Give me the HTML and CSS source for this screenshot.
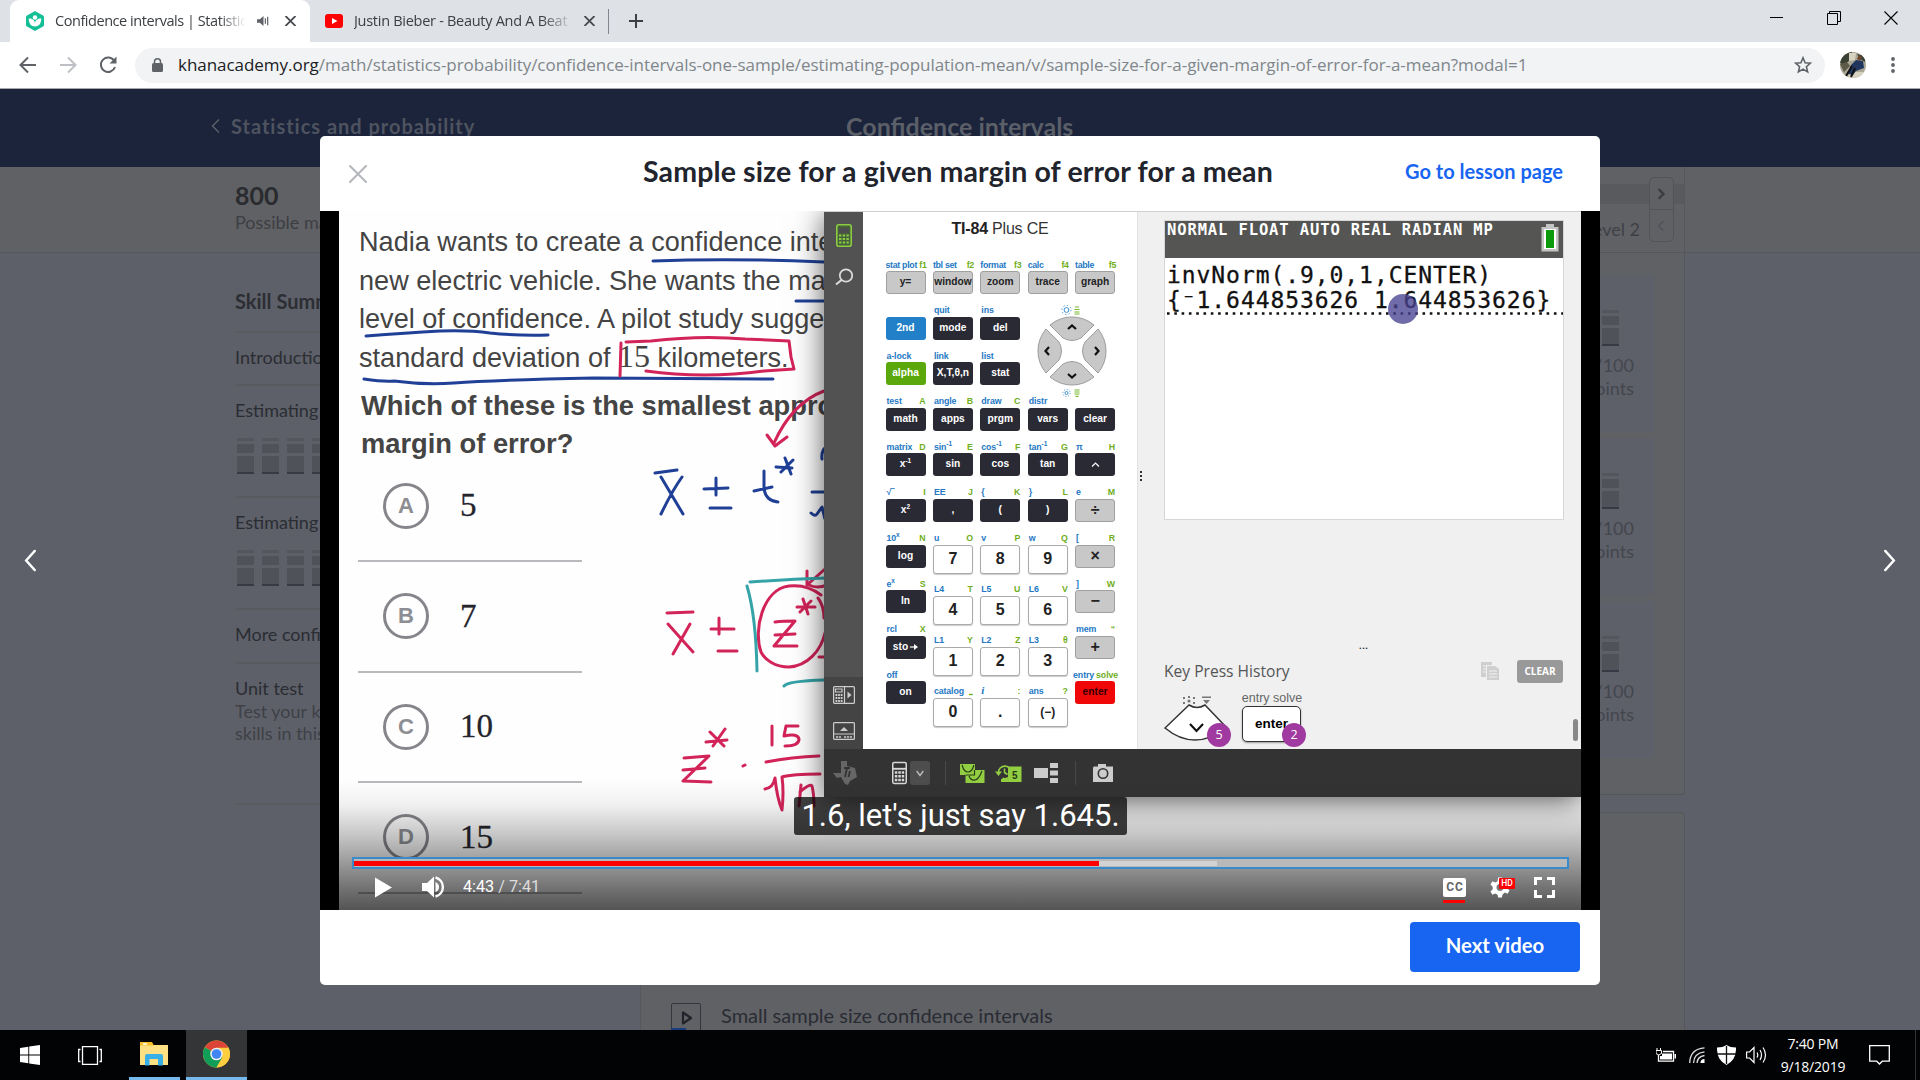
FILE: index.html
```html
<!DOCTYPE html>
<html lang="en">
<head>
<meta charset="utf-8">
<title>Confidence intervals | Statistics and probability</title>
<link rel="stylesheet" href="styles.css">
</head>
<body>
<div class="desktop">
  <div class="tabstrip">
    <div class="tab active">
      <svg class="favicon" viewBox="0 0 18 20"><path d="M9 0l8 4.500q1 .5 1 1.500v8q0 1-1 1.500L9 20l-8-4.500q-1-.5-1-1.500V6q0-1 1-1.500z" fill="#14bf96"/><circle cx="9" cy="6.500" r="2.200" fill="#fff"/><path d="M2.700 7.500c4 0 6 2 6.300 4.500.3-2.500 2.300-4.500 6.300-4.500 0 5-2.500 8-6.300 8s-6.300-3-6.300-8z" fill="#fff"/></svg>
      <span class="tab-title t1">Confidence intervals | Statistics</span>
      <svg class="speaker" viewBox="0 0 14 12"><path d="M0 4h3l4-3.500v11L3 8H0z" fill="#5f6368"/><path d="M9 3v6M11.500 1.500v9" stroke="#5f6368" stroke-width="1.300"/></svg>
      <svg class="x" viewBox="0 0 10 10"><path d="M0 0l10 10M10 0L0 10" stroke="#45494d" stroke-width="1.800"/></svg>
    </div>
    <div class="tab">
      <svg class="favicon" viewBox="0 0 18 20"><rect y="3" width="18" height="14" rx="3" fill="#f00"/><path d="M7 7l5.500 3L7 13z" fill="#fff"/></svg>
      <span class="tab-title t2">Justin Bieber - Beauty And A Beat</span>
      <svg class="x" viewBox="0 0 10 10"><path d="M0 0l10 10M10 0L0 10" stroke="#45494d" stroke-width="1.800"/></svg>
    </div>
    <svg class="plus" viewBox="0 0 16 16"><path d="M8 1v14M1 8h14" stroke="#3c4043" stroke-width="2"/></svg>
    <div class="win">
      <svg width="14" height="14" viewBox="0 0 14 14"><path d="M0 6.500h13" stroke="#000"/></svg>
      <svg width="14" height="14" viewBox="0 0 14 14"><path d="M.5 2.500h10v11H.5zM2.500 2.500V.5h11v10h-3" fill="none" stroke="#000"/></svg>
      <svg width="14" height="14" viewBox="0 0 14 14"><path d="M.5.5l13 13M13.500.5l-13 13" stroke="#000" stroke-width="1.100"/></svg>
    </div>
  </div>
  <div class="toolbar">
    <svg class="nav" viewBox="0 0 20 20"><path d="M18 10H3M10 2.500L2.500 10l7.500 7.500" fill="none" stroke="#5f6368" stroke-width="2"/></svg>
    <svg class="nav" viewBox="0 0 20 20"><path d="M2 10h15M10 2.500l7.500 7.500-7.500 7.500" fill="none" stroke="#bdc1c6" stroke-width="2"/></svg>
    <svg class="nav" viewBox="0 0 20 20"><path d="M16.300 6A7.200 7.200 0 1 0 17 12" fill="none" stroke="#5f6368" stroke-width="2"/><path d="M18.500 1.500v7h-7z" fill="#5f6368"/></svg>
    <div class="omnibox">
      <svg class="lock" viewBox="0 0 11 14"><rect y="5" width="11" height="9" rx="1.500" fill="#5f6368"/><path d="M2.500 6V3.800a3 3 0 0 1 6 0V6" fill="none" stroke="#5f6368" stroke-width="1.500"/></svg>
      <span class="url"><b>khanacademy.org</b>/math/statistics-probability/confidence-intervals-one-sample/estimating-population-mean/v/sample-size-for-a-given-margin-of-error-for-a-mean?modal=1</span>
      <svg class="star" viewBox="0 0 18 18"><path d="M9 1.800l2.100 5 5.300.4-4 3.500 1.200 5.200L9 13.100l-4.600 2.800 1.200-5.200-4-3.500 5.300-.4z" fill="none" stroke="#5f6368" stroke-width="1.600"/></svg>
    </div>
    <svg class="avatar" viewBox="0 0 26 26"><defs><clipPath id="av"><circle cx="13" cy="13" r="13"/></clipPath></defs><g clip-path="url(#av)"><path fill="#aaa694" d="M0 0h26v26H0z"/><path fill="#3a4034" d="M0 0h12l-2 8-6 5-4-2zM17 2l8 2v6l-5-3z"/><path fill="#5d5a48" d="M0 12l7-2 3 4-6 6z"/><path fill="#d8d2c0" d="M9 1h7l-1 7-6 1zM9 20h17v6H8z"/><path fill="#20365f" d="M16 8l7 1 1 7-8 3-3 4-5-1 3-9z"/><path fill="#6c4730" d="M19 3l3 2-2 4-3-2z"/><path d="M6 24l6-10M11 25l4-9" stroke="#111" stroke-width="2"/></g></svg>
    <svg class="dots" viewBox="0 0 4 18"><circle cx="2" cy="3" r="1.900" fill="#5f6368"/><circle cx="2" cy="9" r="1.900" fill="#5f6368"/><circle cx="2" cy="15" r="1.900" fill="#5f6368"/></svg>
  </div>

  <div class="page">
    <header class="site-head">
      <svg class="crumb-arrow" viewBox="0 0 9 14"><path d="M8 .5L1.500 7 8 13.500" fill="none" stroke="#5a5f69" stroke-width="1.500"/></svg>
      <span class="crumb">Statistics and probability</span>
      <span class="unit">Confidence intervals</span>
    </header>
    <section class="mastery">
      <div class="points"><b>800</b><span>Possible mastery points</span></div>
      <div class="levels"><div class="band"></div><span>Level 2</span>
        <div class="steps"><svg viewBox="0 0 24 31"><path d="M9 11l5 5-5 5" fill="none" stroke="#3c3d41" stroke-width="2.500"/></svg><svg viewBox="0 0 24 31"><path d="M14 11l-5 5 5 5" fill="none" stroke="#515257" stroke-width="1.500"/></svg></div>
      </div>
    </section>
    <div class="columns">
      <aside class="skills">
        <h3>Skill Summary</h3>
        <div class="skill intro">Introduction</div>
        <div class="skill est">Estimating a mean<div class="towers"><i></i><i></i><i></i><i></i></div></div>
        <div class="skill est">Estimating a mean<div class="towers"><i></i><i></i><i></i><i></i></div></div>
        <div class="skill more">More confidence</div>
        <div class="skill test">Unit test<p>Test your knowledge<br>skills in this unit</p></div>
      </aside>
      <main class="lessons">
        <div class="panel one">
          <div class="card"><div class="towers"><i></i></div><p>0/100<br>points</p></div>
          <div class="card"><div class="towers"><i></i></div><p>0/100<br>points</p></div>
          <div class="card"><div class="towers"><i></i></div><p>0/100<br>points</p></div>
        </div>
        <div class="panel two">
          <svg viewBox="0 0 30 30"><path d="M.5 40V2Q.5.5 2 .5h26q1.500 0 1.500 1.500v38" fill="none" stroke="#34363d"/><path d="M12 9.500v11l8-5.500z" fill="none" stroke="#22242b" stroke-width="2.200" stroke-linejoin="round"/><path d="M0 25h15v5H0z" fill="#1c3c80"/></svg>
          <span>Small sample size confidence intervals</span>
        </div>
      </main>
    </div>
  </div>

  <svg class="page-prev" viewBox="0 0 14 24"><path d="M12 2L3 12l9 10" fill="none" stroke="#fff" stroke-width="2.500" stroke-linecap="round"/></svg>
  <svg class="page-next" viewBox="0 0 14 24"><path d="M2 2l9 10-9 10" fill="none" stroke="#fff" stroke-width="2.500" stroke-linecap="round"/></svg>

  <div class="modal">
    <div class="modal-head">
      <svg class="close" viewBox="0 0 18 18"><path d="M1 1l16 16M17 1L1 17" stroke="#b3b6bb" stroke-width="2" stroke-linecap="round"/></svg>
      <h1>Sample size for a given margin of error for a mean</h1>
      <a>Go to lesson page</a>
    </div>
    <div class="player">
      <div class="frame">
        <div class="question">
          <p>Nadia wants to create a confidence interval</p>
          <p>new electric vehicle. She wants the margin</p>
          <p>level of confidence. A pilot study suggests</p>
          <p>standard deviation of <em>15</em> kilometers.</p>
        </div>
        <div class="ask">
          <p>Which of these is the smallest approximate</p>
          <p>margin of error?</p>
        </div>
        <ul class="choices">
          <li><i>A</i><span>5</span></li>
          <li><i>B</i><span>7</span></li>
          <li><i>C</i><span>10</span></li>
          <li><i>D</i><span>15</span></li>
        </ul>
        <svg class="ink" viewBox="339 211 1242 699">
          <g stroke="#1f4096" stroke-width="3">
            <path d="M653 261q80-3 171 1M796 301h30M366 336q40-3 74-5 30-1 50 2 30 3 58 2"/>
            <path d="M364 379q20 3 30 2 30 4 60 2 40-3 140-5l179 1"/>
            <path d="M655 473l22-3M661 477l22 37M682 477q-10 14-21 37M704 489l24-1M716 478v17M710 508h21M764 471v18q2 12 14 13M754 491l18-4M785 458l6 16M793 460l-12 12M776 467l16 1M826 447q-5 4-4 12M812 492h14M811 513q4 4 6 1l5-7 3 12"/>
          </g>
          <g stroke="#d22459" stroke-width="3">
            <path d="M621 343l-1 33M626 342l25-1q50-6 94-2l44 2 2 16 3 12-30 2q-60 8-118 0"/>
            <path d="M824 391q-32 12-50 52M767 435l8 11 12-9"/>
            <path d="M667 613l26-1M668 624l25 28M690 624l-17 30M711 629h23M719 618v16M718 651h19"/>
            <path d="M775 622q8-1 20-1l-21 25h23M775 635l20-1M803 599l5 15M811 601l-11 11M797 607h18M821 595q-14-11-32-9c-26 3-36 44-28 66 4 8 14 15 28 15 18-1 32-16 36-34M818 598q6 8 6 20M819 657h6M807 571v14l18-16M809 585q8 4 18 0"/>
            <path d="M684 758l25-2-26 25 28 1M683 770l22-2M710 732l14 14M725 729l-12 17M706 742l21-2M743 766l2-1M772 726v19M786 726h12M786 726l-2 10q14-3 15 3 0 7-14 7M766 762q26-5 53-6M765 789q8-1 10-11 2 20 7 32 2-18 0-33 10-3 38-3M801 785l-2 21M800 792q10-9 12-6 2 8 2 20"/>
          </g>
          <g stroke="#35a3a8" stroke-width="3"><path d="M750 582q40-3 76-4M747 586q9 30 10 85M784 686q4-5 40-6"/></g>
        </svg>

        <div class="emulator">
          <div class="emu-top">
            <div class="rail">
              <svg viewBox="0 0 16 23"><rect x=".8" y=".8" width="14.400" height="21.400" rx="2" fill="#45603a" stroke="#8ccc42" stroke-width="1.600"/><path d="M3 4h10v5H3z" fill="#4d4d50"/><path d="M3 11.500h10M3 15h10M3 18.500h10" stroke="#8ccc42" stroke-width="2.200" stroke-dasharray="2.400 1.300"/></svg>
              <svg class="search" viewBox="0 0 18 18"><circle cx="11" cy="7.500" r="6.200" fill="none" stroke="#ddd" stroke-width="1.700"/><path d="M6.500 12L1 16.500" stroke="#ddd" stroke-width="2"/></svg>
              <div class="rail-low">
                <svg viewBox="0 0 22 18"><g fill="none" stroke="#ccc" stroke-width="1.200"><rect x=".6" y=".6" width="20.800" height="16.800" rx="1"/><path d="M11.500 1v16M2.500 3h6.500v3H2.500z"/></g><path d="M2.500 9h7M2.500 12h7M2.500 15h7" stroke="#ccc" stroke-width="1.800" stroke-dasharray="1.800 .8"/><path d="M14.500 5.500L18.500 9l-4 3.500z" fill="#ccc"/></svg>
                <svg viewBox="0 0 22 18"><rect x=".6" y=".6" width="20.800" height="16.800" rx="1" fill="none" stroke="#ccc" stroke-width="1.200"/><path d="M1 12h20" stroke="#ccc"/><path d="M11 5l4 4H7z" fill="#ccc"/><path d="M3 15h5M11 15h8" stroke="#ccc" stroke-width="1.700" stroke-dasharray="2.200 .8"/></svg>
              </div>
            </div>
            <div class="keypad">
              <div class="brand"><b>TI-84</b> Plus CE</div>
              <div class="cols">
                <div class="col">
                  <div class="k g"><p>stat plot<s>f1</s></p><b>y=</b></div>
                  <div class="k blue"><p></p><b>2nd</b></div>
                  <div class="k green"><p>a-lock</p><b>alpha</b></div>
                  <div class="k"><p>test<s>A</s></p><b>math</b></div>
                  <div class="k"><p>matrix<s>D</s></p><b>x<sup>-1</sup></b></div>
                  <div class="k"><p>√‾<s>I</s></p><b>x<sup>2</sup></b></div>
                  <div class="k"><p><span>10<sup>x</sup></span><s>N</s></p><b>log</b></div>
                  <div class="k"><p><span>e<sup>x</sup></span><s>S</s></p><b>ln</b></div>
                  <div class="k"><p>rcl<s>X</s></p><b>sto<svg class="arr" width="8" height="6" viewBox="0 0 8 6"><path d="M0 3h6" stroke="#fff" stroke-width="1.200"/><path d="M4 0l4 3-4 3z" fill="#fff"/></svg></b></div>
                  <div class="k"><p>off</p><b>on</b></div>
                </div>
                <div class="col">
                  <div class="k g"><p>tbl set<s>f2</s></p><b>window</b></div>
                  <div class="k"><p>quit</p><b>mode</b></div>
                  <div class="k"><p>link</p><b>X,T,θ,n</b></div>
                  <div class="k"><p>angle<s>B</s></p><b>apps</b></div>
                  <div class="k"><p><span>sin<sup>-1</sup></span><s>E</s></p><b>sin</b></div>
                  <div class="k"><p>EE<s>J</s></p><b>,</b></div>
                  <div class="k n"><p>u<s>O</s></p><b>7</b></div>
                  <div class="k n"><p>L4<s>T</s></p><b>4</b></div>
                  <div class="k n"><p>L1<s>Y</s></p><b>1</b></div>
                  <div class="k n"><p>catalog<s>⎵</s></p><b>0</b></div>
                </div>
                <div class="col">
                  <div class="k g"><p>format<s>f3</s></p><b>zoom</b></div>
                  <div class="k"><p>ins</p><b>del</b></div>
                  <div class="k"><p>list</p><b>stat</b></div>
                  <div class="k"><p>draw<s>C</s></p><b>prgm</b></div>
                  <div class="k"><p><span>cos<sup>-1</sup></span><s>F</s></p><b>cos</b></div>
                  <div class="k"><p>{<s>K</s></p><b>(</b></div>
                  <div class="k n"><p>v<s>P</s></p><b>8</b></div>
                  <div class="k n"><p>L5<s>U</s></p><b>5</b></div>
                  <div class="k n"><p>L2<s>Z</s></p><b>2</b></div>
                  <div class="k n"><p><em>i</em><s>:</s></p><b>.</b></div>
                </div>
                <div class="col">
                  <div class="k g"><p>calc<s>f4</s></p><b>trace</b></div>
                  <div class="gap"></div>
                  <div class="k"><p>distr</p><b>vars</b></div>
                  <div class="k"><p><span>tan<sup>-1</sup></span><s>G</s></p><b>tan</b></div>
                  <div class="k"><p>}<s>L</s></p><b>)</b></div>
                  <div class="k n"><p>w<s>Q</s></p><b>9</b></div>
                  <div class="k n"><p>L6<s>V</s></p><b>6</b></div>
                  <div class="k n"><p>L3<s>θ</s></p><b>3</b></div>
                  <div class="k n neg"><p>ans<s>?</s></p><b>(−)</b></div>
                </div>
                <div class="col">
                  <div class="k g"><p>table<s>f5</s></p><b>graph</b></div>
                  <div class="gap"></div>
                  <div class="k"><p></p><b>clear</b></div>
                  <div class="k"><p>π<s>H</s></p><b><svg width="9" height="5" viewBox="0 0 9 5"><path d="M1 4.500L4.500 1 8 4.500" fill="none" stroke="#fff" stroke-width="1.200"/></svg></b></div>
                  <div class="k g op"><p>e<s>M</s></p><b>÷</b></div>
                  <div class="k g op"><p>[<s>R</s></p><b>×</b></div>
                  <div class="k g op"><p>]<s>W</s></p><b>−</b></div>
                  <div class="k g op"><p>mem<s>“</s></p><b>+</b></div>
                  <div class="k red"><p>entry<s>solve</s></p><b>enter</b></div>
                </div>
              </div>
              <svg class="dpad" viewBox="-36 -46 72 92">
                <g fill="#c8c8c8" stroke="#8d8d8d" stroke-width=".8">
                  <path d="M-22-26A34 34 0 0 1 22-26L9-13Q0-8-9-13z"/>
                  <path d="M22 26A34 34 0 0 1-22 26L-9 13Q0 8 9 13z"/>
                  <path d="M26-22A34 34 0 0 1 26 22L13 9Q8 0 13-9z"/>
                  <path d="M-26 22A34 34 0 0 1-26-22L-13-9Q-8 0-13 9z"/>
                </g>
                <path d="M-4-22l4-3.500 4 3.500M-4 23l4 3.500 4-3.500M23-4l3.500 4-3.500 4M-23-4l-3.500 4 3.500 4" fill="none" stroke="#111" stroke-width="2.200"/>
                <g fill="none" stroke="#3b8fd0"><circle cx="-5.500" cy="-41" r="2.400"/><circle cx="-5.500" cy="42" r="1.500"/><circle cx="-5.500" cy="-41" r="4.600" stroke-dasharray="1.200 2.400"/><circle cx="-5.500" cy="42" r="3.600" stroke-dasharray="1 1.800"/></g>
                <path d="M3-44h4M2.500-41.500h5M2.500-39h5M2.500-37h5M2.500 39h5M2.500 41h5M2.500 43h5M3.500 45.300h3" stroke="#7ab82e" stroke-width="1.200"/>
              </svg>
            </div>
            <div class="display">
              <div class="lcd">
                <div class="status"><span>NORMAL FLOAT AUTO REAL RADIAN MP</span>
                  <svg viewBox="0 0 18 28"><path d="M5 0h8v3h4.500v24.500H.5V3H5z" fill="#c4c4c4"/><path d="M3 5h12v20H3z" fill="#fff"/><path d="M5 6h8v18H5z" fill="#0c9a0c"/></svg></div>
                <p>invNorm(.9,0,1,CENTER)</p>
                <p>{⁻1.644853626 1.644853626}</p>
                <svg class="dotline" viewBox="0 0 396 3"><path d="M0 1.500h396" stroke="#111" stroke-width="2.600" stroke-dasharray="2.600 4.700"/></svg>
                <i class="pointer"></i>
              </div>
              <div class="grip">•••</div>
              <div class="history"><span>Key Press History</span>
                <svg viewBox="0 0 18 18"><path d="M0 0h11v3H5v12H0z" fill="#cfcfcf"/><path d="M2 4h3M2 7h3M2 10h3" stroke="#eee"/><path d="M6 4h8l4 3v11H6z" fill="#cfcfcf"/><path d="M8 9h8M8 12h8M8 15h8" stroke="#f0f0f0"/></svg>
                <button>CLEAR</button></div>
              <div class="presses">
                <div class="fan"><svg viewBox="0 0 64 46"><path d="M25 10L1 33Q30 57 63 33L41 10Q33 15 25 10z" fill="#fff" stroke="#333" stroke-width="1.500"/><path d="M26 29l6.500 7 6.500-7" fill="none" stroke="#111" stroke-width="2.200"/><g fill="#777"><circle cx="25" cy="6" r="1.600"/><path d="M19 2h2v2h-2zM24 1h2v2h-2zM29 2h2v2h-2zM19 7h2v2h-2zM29 7h2v2h-2zM38 1.500h9V3h-9zM39 5h7l-3.500 4z"/></g></svg><i>5</i></div>
                <div class="ent"><small>entry solve</small><b>enter</b><i>2</i></div>
              </div>
              <i class="vdots"></i><i class="thumb"></i>
            </div>
          </div>
          <div class="emu-bar">
            <svg class="ti" viewBox="0 0 26 26"><path d="M9 1h6v5l8 2 2 9-7 4-2 4-3-1-4-7-4 1-4-5h8z" fill="#666"/><path d="M12 8h6M15 8l-2 9M18 11l-1.500 6" stroke="#333" stroke-width="1.800"/></svg>
            <svg class="calc" viewBox="0 0 16 24"><rect x=".8" y=".8" width="14.400" height="22.400" rx="1.500" fill="none" stroke="#d8d8d8" stroke-width="1.600"/><path d="M1 7.500h14" stroke="#d8d8d8" stroke-width="2"/><path d="M3 11.500h10M3 15.500h10M3 19.500h10" stroke="#d8d8d8" stroke-width="2.600" stroke-dasharray="2.700 1"/></svg>
            <span class="drop"><svg width="8" height="7" viewBox="0 0 8 7"><path d="M.7 1L4 5.500 7.300 1" fill="none" stroke="#bbb" stroke-width="1.400"/></svg></span>
            <i class="sep"></i>
            <svg class="gr" viewBox="0 0 25 19"><path d="M0 0h15v6h9.500v13H5.500v-8H0z" fill="#92ce41"/><path d="M2 1q2 7 6 7t6-7M9 12q2 5 6 4t7-9M5.500 11h9V6" fill="none" stroke="#293c18" stroke-width="1.200"/></svg>
            <svg class="hs" viewBox="0 0 27 18"><path d="M13 2.500h13.500V18H6v-3h7z" fill="#92ce41"/><path d="M3.500 9a6.300 6.300 0 1 1 4 5.300M9.500 4.500v4l3 2" fill="none" stroke="#92ce41" stroke-width="1.600"/><path d="M0 7.500h7L3.500 12z" fill="#92ce41"/><text x="17" y="14.500" font-family="Liberation Sans" font-weight="bold" font-size="10" fill="#293c18">5</text></svg>
            <svg class="ly" viewBox="0 0 24 20"><path d="M0 5h14v10H0zM16 0h8v5h-8zM16 7.500h8v5h-8zM16 15h8v5h-8z" fill="#ccc"/></svg>
            <i class="sep b"></i>
            <svg class="cam" viewBox="0 0 20 18"><path d="M1 2.500h4V0h8v2.500h7V18H0V3.500z" fill="#ccc"/><circle cx="10" cy="9.500" r="4.700" fill="none" stroke="#333" stroke-width="1.600"/></svg>
          </div>
        </div>

        <div class="shade"></div>
        <div class="caption">1.6, let's just say 1.645.</div>
        <div class="controls">
          <div class="progress"><i class="buffer"></i><i class="played"></i></div>
          <div class="buttons">
            <svg class="play" viewBox="0 0 17 20"><path d="M0 0l17 10L0 20z" fill="#fff"/></svg>
            <svg class="vol" viewBox="0 0 23 22"><path d="M0 7h5l7-6.500v21L5 15H0zM13.500 6q3.500 1.500 3.500 5t-3.500 5z" fill="#fff"/><path d="M13.500 1.500a9.800 9.800 0 0 1 0 19" fill="none" stroke="#fff" stroke-width="2.400"/></svg>
            <span class="time">4:43 <s>/ 7:41</s></span>
            <span class="cc">CC</span>
            <span class="gear"><svg viewBox="-11 -11 22 22"><path d="M-2-10.500h4l.5 3 2.500 1.300 3-1.300 2 3.500-2.300 2v3l2.300 2-2 3.500-3-1.300L2.500 7.500l-.5 3h-4l-.5-3L-5 6.200l-3 1.300-2-3.500 2.300-2v-3l-2.300-2 2-3.500 3 1.300 2.500-1.300z" fill="#fff"/><circle r="3.600" fill="#777"/></svg><em>HD</em></span>
            <svg class="full" viewBox="0 0 21 21"><path d="M1.500 8V1.500H8M13 1.500h6.500V8M19.500 13v6.500H13M8 19.500H1.500V13" fill="none" stroke="#fff" stroke-width="3"/></svg>
          </div>
        </div>
      </div>
    </div>
    <div class="modal-foot"><button>Next video</button></div>
  </div>

  <div class="taskbar">
    <svg class="start" viewBox="0 0 20 20"><path d="M0 3l8.300-1.200v7.700H0zM9.200 1.600L20 0v9.500H9.200zM0 10.500h8.300v7.700L0 17zM9.200 10.500H20V20L9.200 18.400z" fill="#fff"/></svg>
    <svg class="tview" viewBox="0 0 24 19"><path d="M4.500.7h15v17.600h-15zM2.500 3.500H.7v12h1.800M21.500 3.500h1.800v12h-1.800" fill="none" stroke="#fff" stroke-width="1.300"/></svg>
    <div class="app files"><svg viewBox="0 0 28 24"><path d="M0 1h11l2 2h15v20H0z" fill="#fddf84"/><path d="M0 0h12l2 3.500H0z" fill="#f7bf2a"/><path d="M3 2h4" stroke="#fff" stroke-width="1.500"/><path d="M5 23.500V14q0-2 2-2h14q2 0 2 2v9.500h-5V17H9.500v6.500z" fill="#36b0e6"/></svg></div>
    <div class="app chrome"><svg viewBox="0 0 28 28"><circle cx="14" cy="14" r="14" fill="#fc3"/><path d="M14 14L1.900 7A14 14 0 0 1 26.100 7z" fill="#db4437"/><path d="M14 14L1.900 7A14 14 0 0 0 14 28l6-10.500z" fill="#0f9d58"/><path d="M14 7.500h12.400A14 14 0 0 1 14 28l6.500-11z" fill="#ffcd40"/><circle cx="14" cy="14" r="6.500" fill="#f1f1f1"/><circle cx="14" cy="14" r="5" fill="#4285f4"/></svg></div>
    <div class="tray">
      <svg class="bat" viewBox="0 0 20 15"><path d="M2.500 6.500V13.200h15V3.500H7" fill="none" stroke="#fff" stroke-width="1.300"/><path d="M6 5.500h10v6H4V8h2zM18.500 6v4.500H20V6z" fill="#fff"/><path d="M1 0v2M4.500 0v2M0 2.500h5.500v3L2.800 7 0 5.500z" stroke="#fff" fill="#000"/></svg>
      <svg class="wifi" viewBox="0 0 16 16"><g fill="none" stroke="#ddd" stroke-width="1.300"><path d="M.7 16Q1 2 15.500.8M4.500 16Q5 6 15.500 4.800M8 16q.5-6.500 7.500-7.500"/></g><path d="M11.500 16q0-4 4-4v4z" fill="#fff"/></svg>
      <svg class="shield" viewBox="0 0 19 20"><path d="M9.500 0Q13 2.500 19 2.500 19.500 15 9.500 20-.5 15 0 2.500 6 2.500 9.500 0z" fill="#fff"/><path d="M9.500 1v18M0 9h19" stroke="#111" stroke-width="1.300"/></svg>
      <svg class="snd" viewBox="0 0 21 18"><path d="M.6 6h3L8 1.500v15L3.600 12h-3zM11 6.500q1.500 2.500 0 5M14 4q3 5 0 10M17 1.500q5 7.500 0 15" fill="none" stroke="#fff" stroke-width="1.200"/></svg>
      <div class="clock">7:40 PM<br>9/18/2019</div>
      <svg class="note" viewBox="0 0 21 20"><path d="M.7.700h19.600v15.500h-7L10.500 19l-2.800-2.800h-7z" fill="none" stroke="#fff" stroke-width="1.300"/></svg>
    </div>
  </div>
</div>
</body>
</html>
```
FILE: styles.css
```css
* { box-sizing: border-box; }
body { margin: 0; }
p, h1, h3, ul { margin: 0; padding: 0; font-weight: inherit; }
s { text-decoration: none; }
svg { display: block; flex: none; }
.desktop { position: relative; width: 1920px; height: 1080px; overflow: hidden; display: flex; flex-direction: column; font-family: Lato, sans-serif; white-space: nowrap; }

/* browser chrome */
.tabstrip { height: 42px; flex: none; background: #dee1e6; display: flex; padding-left: 10px; font: 14.500px "Open Sans", sans-serif; color: #3c4043; }
.tab { width: 298px; display: flex; align-items: center; padding: 0 14px 0 15px; }
.tab + .tab { background: linear-gradient(#80868b, #80868b) right center / 1px 25px no-repeat; width: 299px; }
.active { background: #fff; border-radius: 9px 9px 0 0; width: 300px; padding-left: 16px; }
.favicon { width: 18px; height: 20px; margin-right: 11px; }
.tab-title { overflow: hidden; padding-bottom: 2px; -webkit-mask: linear-gradient(90deg, #000 86%, transparent); mask: linear-gradient(90deg, #000 86%, transparent); }
.t1 { width: 192px; letter-spacing: -.45px; margin-right: 11px; }
.t2 { width: 221px; letter-spacing: -.28px; margin-right: 11px; }
.speaker { width: 13px; height: 12px; margin-right: 15px; }
.x { width: 11px; height: 10px; }
.plus { width: 16px; height: 16px; margin: 13px 0 0 19px; }
.win { margin-left: auto; display: flex; gap: 43px; padding: 11px 22px 0 0; }
.toolbar { height: 47px; flex: none; background: #fff; border-bottom: 1px solid #a9abae; display: flex; align-items: center; padding: 0 25px 0 18px; }
.nav { width: 20px; height: 20px; margin-right: 20px; }
.nav:nth-child(3) { margin-right: 17px; }
.omnibox { flex: 1; height: 35px; border-radius: 18px; background: #f1f3f4; display: flex; align-items: center; padding: 0 13px 0 17px; }
.lock { width: 11px; height: 14px; margin-right: 15px; }
.url { font: 17px "Open Sans", sans-serif; letter-spacing: -.04px; color: #80868b; padding-bottom: 2px; }
.url b { font-weight: 400; color: #202124; }
.star { width: 18px; height: 18px; margin-left: auto; }
.avatar { width: 26px; height: 26px; margin: 0 25px 0 15px; }
.dots { width: 4px; height: 18px; }

/* dimmed course page */
.page { flex: 1; background: #5d6068; overflow: hidden; }
.site-head { height: 78px; background: #1b243b; display: flex; align-items: center; padding: 0 0 5px 211px; font-weight: 700; }
.crumb-arrow { width: 9px; height: 14px; margin-right: 11px; }
.crumb { font-size: 20px; color: #4e535f; width: 615px; letter-spacing: .98px; }
.unit { font-size: 25px; color: #5b5f68; }
.mastery { height: 86px; background: #606165; border-bottom: 1px solid #55565a; display: flex; justify-content: space-between; padding-left: 235px; }
.points { display: flex; flex-direction: column; padding-top: 13px; font-size: 18px; line-height: 22px; color: #3d3e43; }
.points b { font-size: 25px; line-height: 31px; color: #2a2b2f; }
.levels { width: 1044px; margin-right: 235px; border-right: 1px solid #56575b; position: relative; }
.band { height: 20px; margin-top: 17px; background: #595a5e; }
.levels span { display: block; text-align: right; padding: 14px 44px 0 0; font-size: 18px; color: #3f4045; }
.steps { position: absolute; right: 10px; top: 10px; width: 25px; height: 65px; border: 1px solid #525357; border-radius: 5px; background: #606165; }
.steps svg { width: 23px; height: 31px; }
.steps svg + svg { border-top: 1px solid #525357; height: 32px; }
.columns { display: flex; padding-left: 235px; height: 777px; }
.skills { width: 405px; font-size: 18px; color: #2b2d33; }
.skills h3 { font-size: 20px; font-weight: 700; height: 80px; padding-top: 36px; border-bottom: 2px solid #585b60; color: #2c2e34; }
.skill { border-bottom: 2px solid #585b60; padding-top: 12px; line-height: 24px; }
.intro { height: 53px; }
.est { height: 112px; }
.more { height: 54px; }
.test { height: 141px; }
.test p { line-height: 22px; color: #3f4147; }
.towers { display: flex; gap: 8px; padding: 12px 0 0 2px; }
.towers i { width: 17px; height: 40px; background: linear-gradient(#373a44, #373a44) 0 38px / 17px 2px no-repeat, linear-gradient(#50525a, #50525a) 0 22px / 17px 16px no-repeat, linear-gradient(#50525a, #50525a) 0 10px / 17px 9px no-repeat, conic-gradient(from -30deg at 50% 0, #54565e 0 0) 0 4px / 17px 3px no-repeat; }
.lessons { width: 1045px; }
.panel { background: #606165; border: 1px solid #56575b; border-radius: 4px; }
.one { height: 542px; border-top: 0; border-radius: 0 0 4px 4px; display: flex; flex-direction: column; gap: 6px; padding: 22px 30px 0; }
.card { height: 157px; background: #5d6069; display: flex; flex-direction: column; align-items: flex-end; padding-right: 20px; text-align: right; font-size: 18px; line-height: 22.500px; color: #44464d; }
.card .towers { padding: 31px 15px 8px 0; }
.two { margin-top: 17px; height: 300px; display: flex; align-items: flex-start; gap: 20px; padding: 190px 30px 0; }
.two svg { width: 30px; height: 30px; }
.two span { font-size: 20px; line-height: 24px; color: #292c34; }
.page-prev, .page-next { position: absolute; top: 549px; width: 14px; height: 23px; }
.page-prev { left: 23px; }
.page-next { left: 1883px; }

/* lesson modal */
.modal { position: absolute; left: 320px; top: 136px; width: 1280px; height: 849px; border-radius: 5px; background: #fff; overflow: hidden; display: flex; flex-direction: column; }
.modal-head { height: 75px; display: flex; align-items: center; padding: 0 37px 0 29px; }
.modal-head .close { width: 18px; height: 18px; margin-right: 276px; }
.modal-head h1 { font-size: 28.500px; font-weight: 700; color: #21242c; width: 722px; letter-spacing: .12px; padding-bottom: 6px; }
.modal-head a { font-size: 20px; font-weight: 700; color: #1865f2; margin-left: auto; padding-bottom: 5px; }
.player { height: 699px; background: #000; padding: 0 19px; }
.frame { position: relative; height: 699px; width: 1242px; background: #fefefe; overflow: hidden; font-family: "Liberation Sans", sans-serif; }
.question { padding: 12px 0 0 20px; font-size: 27.100px; line-height: 38.600px; color: #444; }
.question em { font: 32px/30px "Liberation Serif", serif; }
.ask { padding: 10px 0 0 22px; font-size: 27.300px; font-weight: 700; line-height: 38px; color: #444; }
.choices { list-style: none; margin-top: -12px; padding: 0 0 0 19px; width: 243px; }
.choices li { height: 110.600px; border-bottom: 2px solid #b9babd; display: flex; align-items: center; padding-left: 25px; }
.choices i { width: 46px; height: 46px; border: 3.500px solid #85868b; border-radius: 50%; display: flex; align-items: center; justify-content: center; font: 700 22px "Liberation Sans", sans-serif; color: #8d8e93; margin-right: 31px; }
.choices span { font: 33px "Liberation Serif", serif; color: #24242c; -webkit-text-stroke: .3px #24242c; }
.ink { position: absolute; inset: 0; width: 1242px; height: 699px; fill: none; stroke-linecap: round; stroke-linejoin: round; }

/* calculator emulator */
.emulator { position: absolute; left: 485px; top: 0; width: 757px; height: 586px; box-shadow: 0 4px 28px rgba(0,0,0,.65); display: flex; flex-direction: column; }
.emu-top { height: 538px; display: flex; border-top: 1px solid #d0d0d0; background: #f0f0f0; }
.rail { width: 39px; background: #525252; display: flex; flex-direction: column; align-items: center; padding-top: 12px; }
.rail > svg { width: 16px; height: 23px; margin-bottom: 21px; }
.rail > .search { width: 18px; height: 18px; }
.rail-low { margin-top: auto; width: 39px; height: 72px; background: #444; display: flex; flex-direction: column; align-items: center; gap: 18px; padding-top: 9px; }
.rail-low svg { width: 22px; height: 18px; }
.keypad { width: 275px; background: #fff; position: relative; }
.brand { text-align: center; font-size: 16px; line-height: 33px; color: #333; letter-spacing: -.2px; height: 36.500px; }
.brand b { color: #222; }
.cols { display: flex; gap: 7.400px; padding-left: 22.500px; }
.col { width: 40px; }
.k { height: 45.600px; }
.k p { height: 22.600px; display: flex; justify-content: space-between; font-size: 8.800px; font-weight: 700; line-height: 10px; padding: 11px 0 0 1px; color: #2478c4; letter-spacing: -.1px; }
.k:first-child p { letter-spacing: -.3px; margin: 0 -1px; }
.k s { color: #6fae1c; }
.k sup { font-size: 6.500px; line-height: 0; }
.k em { font: italic 700 11px/8px "Liberation Serif", serif; }
.k b { height: 23px; display: flex; align-items: center; justify-content: center; border-radius: 3px; background: #2a2a35; color: #fff; font-size: 10.200px; line-height: 10px; padding-bottom: 1px; }
.k b sup { margin-top: -7px; }
.k b .arr { margin-left: 2px; }
.g b { background: #c8c8c8; color: #222; border: 1px solid #a0a0a0; }
.blue b { background: #2280c8; }
.green b { background: #5ba80c; }
.red b { background: #f00808; color: #300; }
.red p { margin: 0 -3px; }
.op b { font-size: 16px; }
.n { height: 51.100px; }
.n b { height: 29px; background: #fff; border: 1px solid #aaa; color: #222; font-size: 16px; box-shadow: 0 1px 1px #ccc; }
.n.neg b { font-size: 12px; }
.gap { height: 91.200px; }
.dpad { position: absolute; left: 173px; top: 93px; width: 72px; height: 92px; }
.display { flex: 1; background: #f0f0f0; padding: 8px 17px 0 26px; position: relative; border-left: 1px solid #e2e2e2; }
.lcd { position: relative; height: 300px; background: #fff; border: 1px solid #d6d6d6; font: 23px/25px "DejaVu Sans Mono", monospace; color: #111; -webkit-text-stroke: .3px #111; }
.status { height: 37px; background: #555653; color: #fff; display: flex; justify-content: space-between; padding: 0 4px 0 2px; margin-bottom: 5px; font: 700 15.500px/19px "DejaVu Sans Mono", monospace; letter-spacing: .88px; -webkit-text-stroke: 0; }
.status svg { width: 18px; height: 28px; margin-top: 3px; }
.lcd p { padding-left: 2px; letter-spacing: .930px; }
.dotline { width: 396px; height: 3px; margin: -1px 0 0 2px; }
.pointer { position: absolute; left: 223px; top: 73px; width: 30px; height: 30px; border-radius: 50%; background: rgba(72,67,145,.78); }
.grip { text-align: center; font-size: 6px; line-height: 10px; letter-spacing: 1px; margin-top: 123px; color: #333; }
.history { display: flex; align-items: center; height: 24px; margin-top: 6px; font: 15.600px "Open Sans", sans-serif; color: #555; }
.history svg { width: 18px; height: 18px; margin-left: auto; margin-right: 18px; }
.history button { width: 46px; height: 23px; padding: 0; margin-right: 1px; border: 0; border-radius: 3px; background: #999; color: #fff; font: 700 10px "Open Sans", sans-serif; }
.presses { display: flex; gap: 14px; padding-top: 8px; }
.presses i { position: absolute; right: -4px; bottom: -7px; width: 24px; height: 24px; border-radius: 50%; background: #a03aa0; color: #fff; font: 12.500px/24px "Open Sans", sans-serif; text-align: center; }
.fan { position: relative; width: 64px; height: 48px; }
.fan svg { width: 64px; height: 46px; margin-top: 4px; }
.presses .fan i { right: -3px; bottom: -8px; }
.ent { position: relative; width: 60px; height: 50px; }
.ent small { display: block; font-size: 12.500px; line-height: 14px; color: #666; text-align: center; margin: 0 -4px; }
.ent b { display: block; width: 59px; height: 36px; border: 1.500px solid #333; border-radius: 5px; background: #fff; font-size: 13.500px; line-height: 34px; text-align: center; margin-top: 1px; box-shadow: 0 1px 2px #999; }
.presses .ent i { bottom: -6px; right: -4px; }
.vdots { position: absolute; left: 2px; top: 259px; width: 2px; height: 10px; background: repeating-linear-gradient(#333 0 2px, transparent 2px 4px); }
.thumb { position: absolute; right: 3px; top: 507px; width: 5px; height: 22px; border-radius: 3px; background: #888; }
.emu-bar { flex: 1; background: #333; display: flex; align-items: center; padding-left: 8px; }
.ti { width: 26px; height: 26px; margin-right: 34px; }
.calc { width: 15px; height: 24px; margin-right: 3px; }
.drop { width: 20px; height: 24px; border-radius: 3px; background: #4d4d4d; display: flex; align-items: center; justify-content: center; }
.sep { width: 1px; height: 24px; background: #484848; margin: 0 14px 0 15px; }
.gr { width: 25px; height: 19px; margin-right: 10px; }
.hs { width: 27px; height: 18px; margin-right: 12px; }
.ly { width: 24px; height: 20px; }
.sep.b { margin: 0 17px; }
.cam { width: 20px; height: 18px; }

/* player chrome */
.shade { position: absolute; left: 0; right: 0; bottom: 0; height: 130px; background: linear-gradient(rgba(0,0,0,0), rgba(0,0,0,.06) 20%, rgba(0,0,0,.22) 42%, rgba(0,0,0,.38) 62%, rgba(0,0,0,.54) 82%, rgba(0,0,0,.67)); }
.caption { position: absolute; left: 455px; top: 586px; width: 333px; height: 38px; border-radius: 3px; background: rgba(8,8,8,.77); color: #fff; font: 31px/38px Roboto, sans-serif; text-align: center; }
.controls { position: absolute; left: 13px; right: 12px; bottom: 0; height: 53px; }
.progress { position: relative; height: 12px; border: 2px solid #3b8bcb; background: #b9b9b9; padding: 1px 0; }
.progress i { position: absolute; left: 0; top: 2px; height: 5px; }
.buffer { width: 863px; background: #d2d2d2; }
.played { width: 745px; background: #f00; }
.buttons { display: flex; align-items: center; height: 36px; padding: 0 14px 0 23px; }
.play { width: 17px; height: 21px; margin-right: 30px; }
.vol { width: 23px; height: 22px; margin-right: 18px; }
.time { font: 16.200px Roboto, sans-serif; color: #fff; margin-top: -2px; }
.time s { color: #ddd; }
.cc { position: relative; margin-left: auto; width: 23px; height: 19px; margin-right: 23px; background: #fff; border-radius: 2px; color: #666; font: 700 12px/19px Roboto, sans-serif; text-align: center; letter-spacing: 1px; padding-left: 1px; }
.cc::after { content: ""; position: absolute; left: 0; bottom: -6px; width: 22px; height: 3px; background: #f00; }
.gear { position: relative; width: 22px; height: 21px; margin-right: 23px; }
.gear svg { width: 22px; height: 21px; }
.gear em { position: absolute; left: 10px; top: 1px; width: 16px; height: 11px; background: #f00; color: #fff; font: 500 8.500px/11px Roboto, sans-serif; text-align: center; border-radius: 1px; }
.full { width: 21px; height: 21px; }
.modal-foot { height: 75px; display: flex; justify-content: flex-end; padding: 12px 20px; }
.modal-foot button { width: 170px; height: 50px; border: 0; border-radius: 4px; background: #1865f2; color: #fff; font: 700 20.300px Lato, sans-serif; padding-bottom: 5px; }

/* taskbar */
.taskbar { height: 50px; flex: none; background: #020305; display: flex; align-items: center; padding-left: 20px; border-right: 1px solid #333; width: 1916px; position: relative; box-shadow: 4px 0 #020305; }
.start { width: 20px; height: 20px; margin-right: 38px; }
.tview { width: 24px; height: 19px; margin-right: 27px; }
.app { height: 50px; border-bottom: 3px solid #76b9ed; display: flex; justify-content: center; align-items: center; }
.files { width: 51px; margin-right: 6px; padding-right: 2px; }
.files svg { width: 28px; height: 24px; }
.chrome { width: 61px; background: #343536; padding-right: 1px; }
.chrome svg { width: 27px; height: 28px; }
.tray { margin-left: auto; display: flex; align-items: center; padding-right: 25px; }
.bat { width: 20px; height: 15px; margin-right: 13px; }
.wifi { width: 16px; height: 16px; margin-right: 12px; }
.shield { width: 19px; height: 20px; margin-right: 10px; }
.snd { width: 21px; height: 18px; margin-right: 11px; }
.clock { width: 70px; text-align: center; color: #fff; font: 14px/23px "Open Sans", sans-serif; letter-spacing: -.2px; margin-right: 21px; padding-bottom: 1px; }
.note { width: 21px; height: 20px; }
```
